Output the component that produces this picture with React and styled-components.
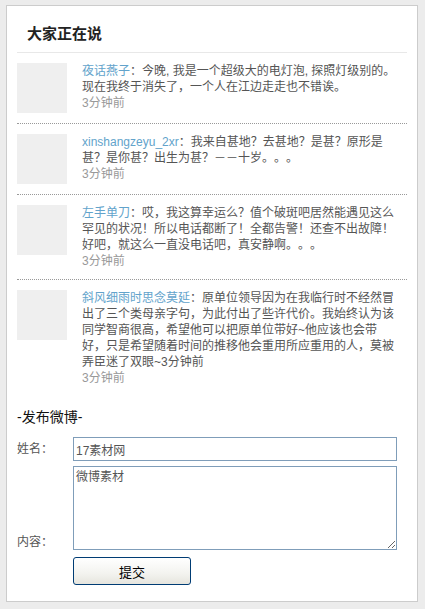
import React from 'react'
import styled, { createGlobalStyle } from 'styled-components'

const GlobalStyle = createGlobalStyle`
  body {
    margin: 0;
    background: #ececec;
    font-family: "Liberation Sans", "Noto Sans CJK SC", sans-serif;
    font-size: 12px;
    text-spacing-trim: space-all;
  }
`

const Wrapper = styled.div`
  padding: 5px 7px 6px 6px;
`

const Panel = styled.div`
  background: #fff;
  border: 1px solid #ccc;
  padding: 0 10px 16px;
`

const Header = styled.h2`
  margin: 0;
  padding: 18px 10px 8px;
  line-height: 20px;
  font-size: 15px;
  font-weight: bold;
  color: #222;
  border-bottom: 1px solid #e8e8e8;
`

const List = styled.ul`
  list-style: none;
  margin: 0;
  padding: 0;
`

const Item = styled.li`
  display: flex;
  gap: 15px;
  padding: 10px 0;
  border-bottom: 1px dotted #999;

  &:last-child {
    border-bottom: none;
  }
`

const Avatar = styled.div`
  flex: none;
  width: 50px;
  height: 50px;
  background: #efefef;
`

const Body = styled.div`
  width: 315px;
  line-height: 16px;
  color: #555;
`

const Name = styled.a`
  color: #62a3cb;
  text-decoration: none;
`

const Time = styled.div`
  color: #999;
`

const Form = styled.form`
  margin-top: 11px;
`

const FormTitle = styled.h3`
  margin: 0 0 10px;
  font-size: 14px;
  font-weight: normal;
  line-height: 20px;
  color: #111;
`

const Row = styled.div`
  display: flex;
  align-items: ${p => p.$align || 'center'};
  margin-bottom: ${p => p.$gap || '5px'};
`

const Label = styled.label`
  width: 56px;
  flex: none;
  color: #555;
  line-height: 16px;
`

const TextInput = styled.input`
  box-sizing: border-box;
  width: 324px;
  height: 24px;
  border: 1px solid #7f9db9;
  padding: 0 2px;
  font: 12px "Liberation Sans", "Noto Sans CJK SC", sans-serif;
  color: #555;
  outline: none;
`

const TextArea = styled.textarea`
  box-sizing: border-box;
  display: block;
  width: 324px;
  height: 84px;
  border: 1px solid #7f9db9;
  padding: 2px 2px;
  font: 12px/16px "Liberation Sans", "Noto Sans CJK SC", sans-serif;
  color: #555;
  outline: none;
`

const Submit = styled.button`
  margin-left: 56px;
  width: 118px;
  height: 28px;
  border: 1px solid #003c74;
  border-radius: 3px;
  background: linear-gradient(#fff, #f3f3ef 60%, #e6e5de);
  font: 13px "Liberation Sans", "Noto Sans CJK SC", sans-serif;
  color: #000;
`

const posts = [
  {
    name: '夜话燕子',
    text: '今晚, 我是一个超级大的电灯泡, 探照灯级别的。现在我终于消失了，一个人在江边走走也不错诶。'
  },
  {
    name: 'xinshangzeyu_2xr',
    text: '我来自甚地？去甚地？是甚？原形是甚？是你甚？出生为甚？－－十岁。。。'
  },
  {
    name: '左手单刀',
    text: '哎，我这算幸运么？值个破斑吧居然能遇见这么罕见的状况！所以电话都断了！全都告警！还查不出故障！好吧，就这么一直没电话吧，真安静啊。。。'
  },
  {
    name: '斜风细雨时思念莫延',
    text: '原单位领导因为在我临行时不经然冒出了三个类母亲字句，为此付出了些许代价。我始终认为该同学智商很高，希望他可以把原单位带好~他应该也会带好，只是希望随着时间的推移他会重用所应重用的人，莫被弄臣迷了双眼~3分钟前'
  }
]

const App = () => {
  return (
    <Wrapper>
      <GlobalStyle />
      <Panel>
        <Header>大家正在说</Header>
        <List>
          {posts.map((p, i) => (
            <Item key={i}>
              <Avatar />
              <Body>
                <Name href="#">{p.name}</Name>：{p.text}
                <Time>3分钟前</Time>
              </Body>
            </Item>
          ))}
        </List>
        <Form onSubmit={e => e.preventDefault()}>
          <FormTitle>-发布微博-</FormTitle>
          <Row>
            <Label>姓名：</Label>
            <TextInput defaultValue="17素材网" />
          </Row>
          <Row $align="flex-end" $gap="7px">
            <Label>内容：</Label>
            <TextArea defaultValue="微博素材" />
          </Row>
          <Submit type="submit">提交</Submit>
        </Form>
      </Panel>
    </Wrapper>
  )
}

export default App
